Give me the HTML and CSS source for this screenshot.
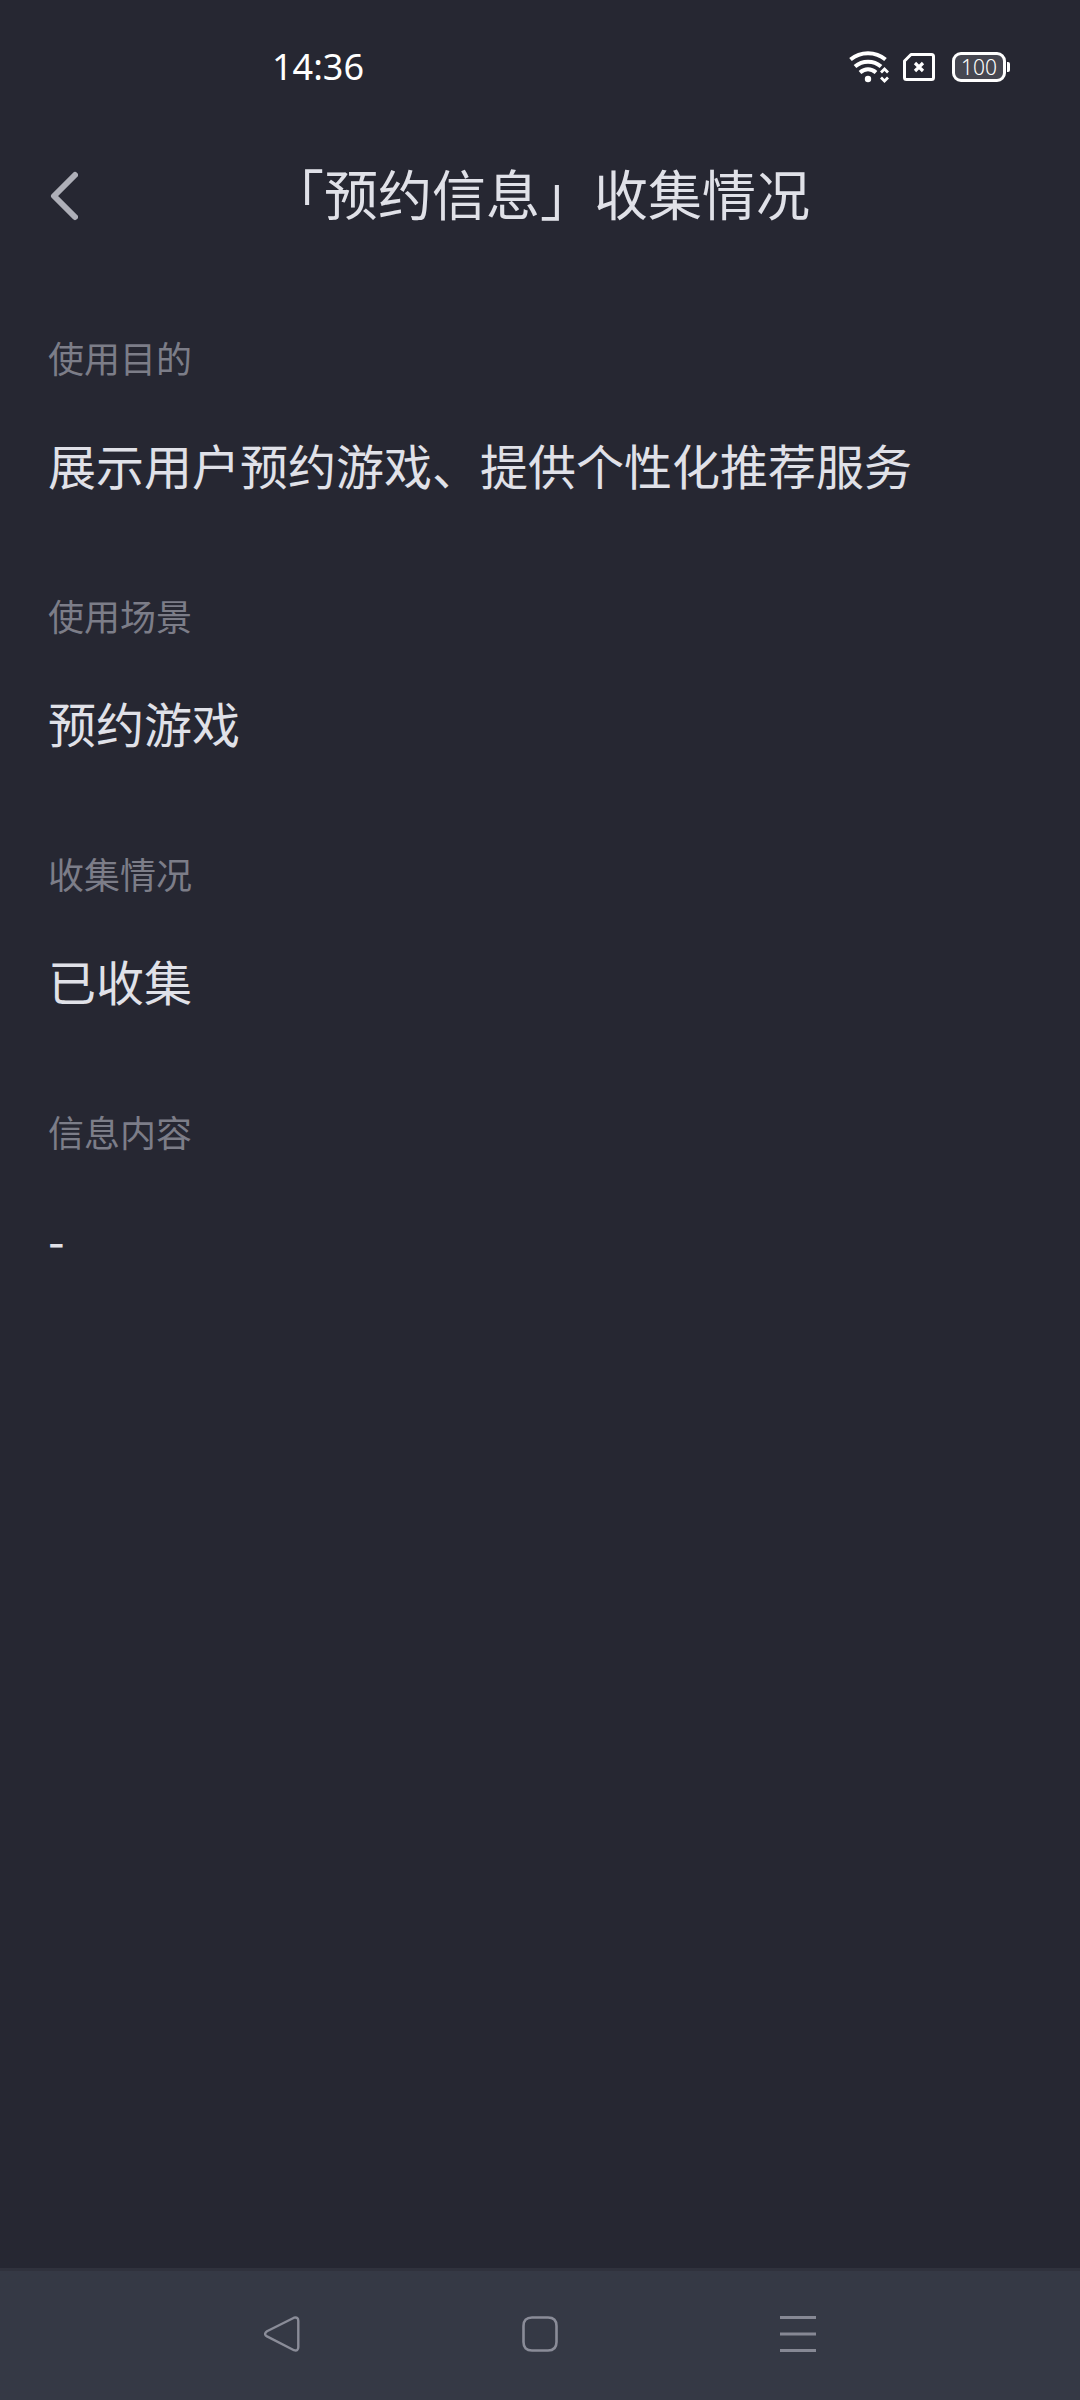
FILE: index.html
```html
<!DOCTYPE html>
<html lang="zh-CN">
<head>
<meta charset="utf-8">
<meta name="viewport" content="width=device-width, initial-scale=1">
<title>「预约信息」收集情况</title>
<link rel="stylesheet" href="styles.css">
</head>
<body class="screen">
<div class="status-bar">
  <time class="clock">14:36</time>
  <div class="indicators">
    <svg class="wifi" width="40" height="32" viewBox="0 0 40 32" fill="none" stroke="#fff" stroke-width="4" aria-hidden="true">
      <path d="M1.5 8.5C11.500 0 26.500 0 36.500 8.500"/>
      <path d="M6 15.500C13.500 9 24.500 9 32 15.500"/>
      <path d="M11 21.500C16 17.200 22 17.200 27 21.500"/>
      <circle cx="19" cy="28" r="3.200" fill="#fff" stroke="none"/>
      <path d="M32 21.500L35.500 18L39 21.500M32 26.500L35.500 30L39 26.500" stroke-width="2.800"/>
    </svg>
    <svg class="sim" width="32" height="28" viewBox="0 0 32 28" fill="none" stroke="#fff" stroke-width="3" stroke-linejoin="round" aria-hidden="true">
      <path d="M8 1.500H28.500Q30.500 1.500 30.500 3.500V24.500Q30.500 26.500 28.500 26.500H3.500Q1.500 26.500 1.500 24.500V8Z"/>
      <path d="M12 10L20 18M20 10L12 18" stroke-width="3.200"/>
    </svg>
    <div class="battery"><span class="battery-level">100</span><span class="battery-tip"></span></div>
  </div>
</div>
<header class="header">
  <button class="back" type="button" aria-label="返回">
    <svg width="28" height="50" viewBox="0 0 28 50" fill="none" stroke="#aeafb8" stroke-width="6" stroke-linecap="round" stroke-linejoin="round" aria-hidden="true"><path d="M25 4L4 25L25 46"/></svg>
  </button>
  <h1 class="title">「预约信息」收集情况</h1>
</header>
<main class="content">
  <dl class="details">
    <div class="item"><dt class="label">使用目的</dt><dd class="value">展示用户预约游戏、提供个性化推荐服务</dd></div>
    <div class="item"><dt class="label">使用场景</dt><dd class="value">预约游戏</dd></div>
    <div class="item"><dt class="label">收集情况</dt><dd class="value">已收集</dd></div>
    <div class="item"><dt class="label">信息内容</dt><dd class="value">-</dd></div>
  </dl>
</main>
<nav class="nav-bar" aria-label="系统导航">
  <button class="nav-button" type="button" aria-label="后退">
    <svg width="36" height="36" viewBox="0 0 36 36" fill="none" stroke="#8a8c98" stroke-width="2.400" stroke-linejoin="round"><path d="M30 1.700L3 15.300Q-.8 18 3 20.400L30 34.200Q34.300 35.500 34.300 31V5Q34.300 .5 30 1.700Z"/></svg>
  </button>
  <button class="nav-button" type="button" aria-label="主屏幕">
    <svg width="36" height="36" viewBox="0 0 36 36" fill="none" stroke="#8a8c98" stroke-width="2.600"><path d="M10 1.500H26Q34.500 1.500 34.500 10V26Q34.500 34.500 26 34.500H10Q1.500 34.500 1.500 26V10Q1.500 1.500 10 1.500Z"/></svg>
  </button>
  <button class="nav-button" type="button" aria-label="最近任务">
    <svg width="36" height="36" viewBox="0 0 36 36" fill="none" stroke="#868894" stroke-width="3"><path d="M0 1.500H36M0 18H36M0 34.500H36"/></svg>
  </button>
</nav>
</body>
</html>
```
FILE: styles.css
```css
* {
  box-sizing: border-box;
}

.screen {
  display: flex;
  flex-direction: column;
  min-height: 100vh;
  margin: 0;
  background: #262732;
  color: #e0e1e8;
  font-family: "Noto Sans CJK SC", sans-serif;
}

button {
  padding: 0;
  border: 0;
  background: none;
}

svg {
  display: block;
}

.status-bar {
  display: flex;
  align-items: center;
  justify-content: space-between;
  height: 134px;
  padding: 0 70px 0 272px;
  color: #fff;
}

.clock {
  font: 400 36px/52px "Noto Sans", sans-serif;
}

.indicators {
  display: flex;
  align-items: center;
  gap: 14px;
}

.battery {
  display: flex;
  align-items: center;
  gap: 1px;
  margin-left: 3px;
}

.battery-level {
  display: flex;
  align-items: center;
  justify-content: center;
  width: 54px;
  height: 30px;
  border: 3px solid #fff;
  border-radius: 9px;
  background: #464751;
  font: 300 21px/24px "Noto Sans", sans-serif;
}

.battery-tip {
  width: 3px;
  height: 10px;
  border-radius: 0 2px 2px 0;
  background: #fff;
}

.header {
  display: grid;
  grid-template-columns: 96px 1fr 96px;
  align-items: center;
  height: 124px;
}

.back {
  display: flex;
  align-items: center;
  height: 96px;
  padding-left: 50px;
}

.title {
  margin: 0;
  padding-bottom: 6px;
  font-size: 54px;
  font-weight: 400;
  line-height: 80px;
  text-align: center;
}

.content {
  flex: 1;
  padding: 73px 48px;
}

.details {
  display: flex;
  flex-direction: column;
  gap: 89px;
  margin: 0;
}

.item {
  display: flex;
  flex-direction: column;
  gap: 45px;
}

.label {
  color: #7c7d88;
  font-size: 36px;
  line-height: 52px;
}

.value {
  margin: 0;
  font-size: 48px;
  line-height: 72px;
}

.nav-bar {
  display: flex;
  align-items: center;
  justify-content: center;
  height: 132px;
  padding-bottom: 3px;
  border-top: 3px solid #30323d;
  background: #353945;
}

.nav-button {
  display: flex;
  align-items: center;
  justify-content: center;
  width: 258px;
  height: 96px;
}
```
